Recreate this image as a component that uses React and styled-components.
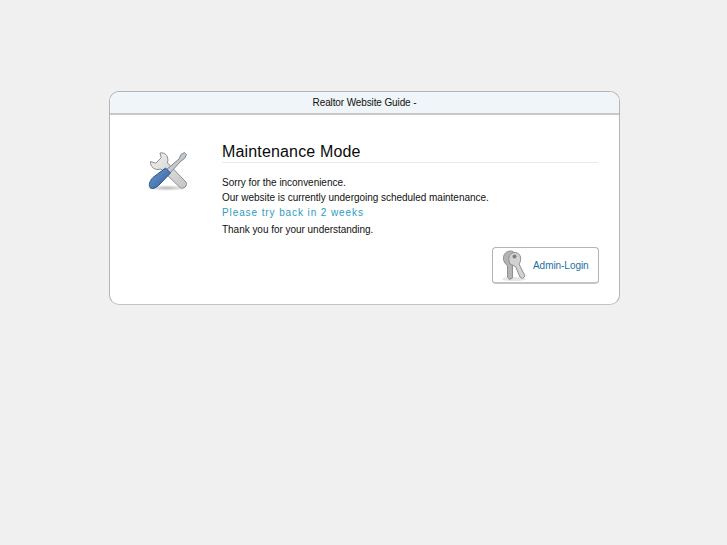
import React from 'react';
import styled, { createGlobalStyle } from 'styled-components';

const GlobalStyle = createGlobalStyle`
  html, body {
    margin: 0;
    padding: 0;
    background: #f0f0f0;
    font-family: "Liberation Sans", Arial, sans-serif;
  }
`;

const Page = styled.div`
  min-height: 545px;
  padding-top: 91px;
  box-sizing: border-box;
`;

const Card = styled.div`
  width: 511px;
  height: 214px;
  margin-left: 109px;
  box-sizing: border-box;
  background: #fff;
  border: 1px solid #b4b4b4;
  border-bottom-color: #c4c4c4;
  border-radius: 10px;
  overflow: hidden;
`;

const CardHeader = styled.div`
  height: 21px;
  border-bottom: 2px solid #c8c8c8;
  background: #eff5f8;
  color: #111;
  font-size: 10px;
  letter-spacing: -0.12px;
  line-height: 21px;
  text-align: center;
`;

const CardBody = styled.div`
  display: flex;
  padding: 27px 20px 0 36px;
`;

const IconColumn = styled.div`
  width: 76px;
  flex: none;
  padding-top: 7px;
`;

const Content = styled.div`
  flex: 1;
`;

const Title = styled.h1`
  margin: 0 1px 12px 0;
  border-bottom: 1px solid #e8e8e8;
  color: #0a0a0a;
  font-size: 16px;
  font-weight: normal;
  letter-spacing: 0.16px;
  line-height: 20px;
`;

const Line = styled.div`
  color: #111;
  font-size: 10px;
  letter-spacing: -0.03px;
  line-height: 15px;
`;

const Notice = styled(Line)`
  margin-bottom: 1px;
  color: #2a9cc4;
  letter-spacing: 0.9px;
  line-height: 16px;
`;

const Actions = styled.div`
  display: flex;
  justify-content: flex-end;
  margin-top: 10px;
`;

const AdminButton = styled.a`
  display: flex;
  align-items: center;
  gap: 5px;
  width: 107px;
  height: 37px;
  box-sizing: border-box;
  padding-left: 9px;
  border: 1px solid #b4b4b4;
  border-bottom: 2px solid #c4c4c4;
  border-radius: 4px;
  color: #1d6f9f;
  font-size: 10px;
  letter-spacing: -0.05px;
  text-decoration: none;
`;

function ToolsIcon() {
  return (
    <svg width="44" height="44" viewBox="146 148 44 44" aria-hidden="true">
      <defs>
        <radialGradient id="toolShadow">
          <stop offset="0" stopColor="#000" stopOpacity="0.28" />
          <stop offset="1" stopColor="#000" stopOpacity="0" />
        </radialGradient>
        <linearGradient id="handle" x1="0" y1="0" x2="1" y2="1">
          <stop offset="0" stopColor="#6f9bd0" />
          <stop offset="1" stopColor="#2f5f9e" />
        </linearGradient>
        <linearGradient id="steel" x1="0" y1="0" x2="1" y2="1">
          <stop offset="0" stopColor="#f0f0f0" />
          <stop offset="1" stopColor="#c4c4c4" />
        </linearGradient>
      </defs>
      <ellipse cx="167" cy="187" rx="21" ry="3" fill="url(#toolShadow)" />
      <path
        d="M160 152 L161.2 156.8 L155.8 162.2 L150.5 160.5 C150 166 155 170 161 168 L180 186.5 C183 189 188.5 184.5 186 181 L167.5 162 C169 156 166 151 160 152 Z"
        fill="url(#steel)"
        stroke="#8f8f8f"
        strokeWidth="1"
        strokeLinejoin="round"
      />
      <path
        d="M179 158 L181 153.5 L184.5 151.5 L186.5 153.5 L184.5 157.5 L181 160 L170 172 L166.5 168.5 Z"
        fill="#c2c8ce"
        stroke="#83888e"
        strokeWidth="1"
        strokeLinejoin="round"
      />
      <path
        d="M165.5 167 L170.5 172 L160 183 C156 187.5 151.5 188.5 150 186.5 C148.5 184.5 149.5 180 153 176.5 Z"
        fill="url(#handle)"
        stroke="#2b5288"
        strokeWidth="1"
        strokeLinejoin="round"
      />
    </svg>
  );
}

function KeysIcon() {
  return (
    <svg width="26" height="33" viewBox="502 251 26 33" aria-hidden="true">
      <ellipse cx="514" cy="281" rx="12" ry="2" fill="#000" opacity="0.1" />
      <path
        d="M505 265 C501 259 505 253 510.5 253 C515 253 517 258 515 263 L512.5 268 L512.5 280 L509.5 281.5 L507.5 279 L507.5 268 Z"
        fill="#b4b4b4"
        stroke="#8f8f8f"
        strokeWidth="1"
        strokeLinejoin="round"
      />
      <path
        d="M510 266 C507 260 510 254 515.5 254.5 C521 255 522 262 519 266 L525 278 L522.5 280.5 L520 279 L515.5 268.5 Z"
        fill="#d2d2d2"
        stroke="#8f8f8f"
        strokeWidth="1"
        strokeLinejoin="round"
      />
      <circle cx="514.5" cy="258.5" r="2" fill="#7e7e7e" />
    </svg>
  );
}

export default function App() {
  return (
    <Page>
      <GlobalStyle />
      <Card>
        <CardHeader>Realtor Website Guide -</CardHeader>
        <CardBody>
          <IconColumn>
            <ToolsIcon />
          </IconColumn>
          <Content>
            <Title>Maintenance Mode</Title>
            <Line>Sorry for the inconvenience.</Line>
            <Line>Our website is currently undergoing scheduled maintenance.</Line>
            <Notice>Please try back in 2 weeks</Notice>
            <Line>Thank you for your understanding.</Line>
            <Actions>
              <AdminButton href="#">
                <KeysIcon />
                Admin-Login
              </AdminButton>
            </Actions>
          </Content>
        </CardBody>
      </Card>
    </Page>
  );
}
